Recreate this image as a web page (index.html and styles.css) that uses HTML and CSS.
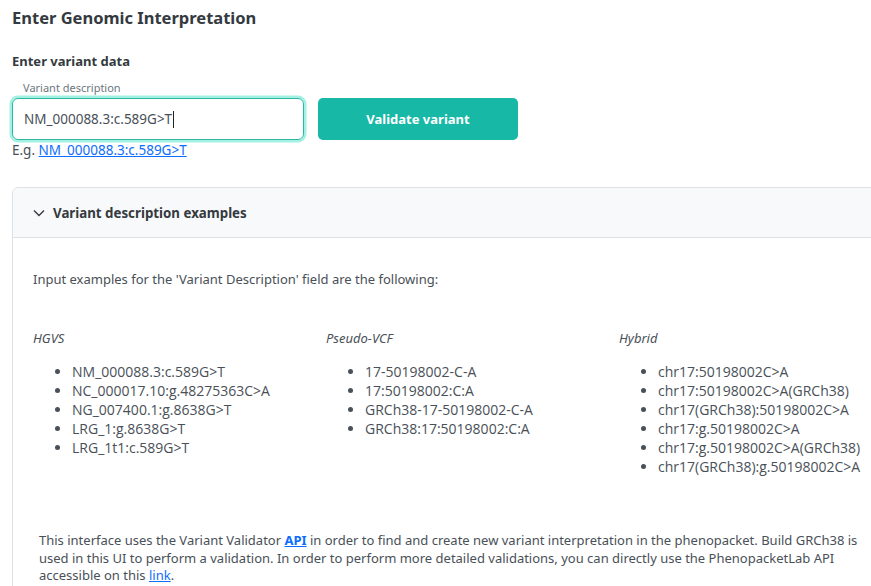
FILE: index.html
```html
<!DOCTYPE html>
<html>
<head>
<meta charset="utf-8">
<link rel="stylesheet" href="styles.css">
</head>
<body>
<div class="page">
  <h1 class="title">Enter Genomic Interpretation</h1>
  <h2 class="subtitle">Enter variant data</h2>
  <div class="form-row">
    <div class="field">
      <label class="label">Variant description</label>
      <div class="input">NM_000088.3:c.589G&gt;T<span class="caret"></span></div>
      <div class="hint">E.g. <a href="#">NM_000088.3:c.589G&gt;T</a></div>
    </div>
    <button class="btn">Validate variant</button>
  </div>

  <div class="card">
    <div class="card-header">
      <svg class="chev" width="12" height="8" viewBox="0 0 12 8"><path d="M1 1.5 L6 6.5 L11 1.5" fill="none" stroke="#343a40" stroke-width="1.4"/></svg>
      <span>Variant description examples</span>
    </div>
    <div class="card-body">
      <p class="intro">Input examples for the 'Variant Description' field are the following:</p>
      <div class="cols">
        <div class="col">
          <div class="col-title">HGVS</div>
          <ul>
            <li>NM_000088.3:c.589G&gt;T</li>
            <li>NC_000017.10:g.48275363C&gt;A</li>
            <li>NG_007400.1:g.8638G&gt;T</li>
            <li>LRG_1:g.8638G&gt;T</li>
            <li>LRG_1t1:c.589G&gt;T</li>
          </ul>
        </div>
        <div class="col">
          <div class="col-title">Pseudo-VCF</div>
          <ul>
            <li>17-50198002-C-A</li>
            <li>17:50198002:C:A</li>
            <li>GRCh38-17-50198002-C-A</li>
            <li>GRCh38:17:50198002:C:A</li>
          </ul>
        </div>
        <div class="col">
          <div class="col-title">Hybrid</div>
          <ul>
            <li>chr17:50198002C&gt;A</li>
            <li>chr17:50198002C&gt;A(GRCh38)</li>
            <li>chr17(GRCh38):50198002C&gt;A</li>
            <li>chr17:g.50198002C&gt;A</li>
            <li>chr17:g.50198002C&gt;A(GRCh38)</li>
            <li>chr17(GRCh38):g.50198002C&gt;A</li>
          </ul>
        </div>
      </div>
      <p class="note">This interface uses the Variant Validator <a href="#" class="strong">API</a> in order to find and create new variant interpretation in the phenopacket. Build GRCh38 is used in this UI to perform a validation. In order to perform more detailed validations, you can directly use the PhenopacketLab API accessible on this <a href="#">link</a>.</p>
    </div>
  </div>
</div>
</body>
</html>
```
FILE: styles.css
```css
html, body {
  margin: 0;
  padding: 0;
  overflow: hidden;
  background: #fff;
}
body {
  font-family: "Noto Sans", "Open Sans", sans-serif;
  color: #343a40;
}
.page {
  padding: 0 0 0 12px;
  width: 940px;
}
.title {
  margin: 0;
  padding-top: 6px;
  font-size: 16.5px;
  font-weight: 700;
  line-height: 24px;
  color: #343a40;
}
.subtitle {
  margin: 22px 0 0;
  font-size: 13px;
  font-weight: 700;
  line-height: 18px;
  color: #343a40;
}
.form-row {
  display: flex;
  align-items: flex-start;
  gap: 14px;
  margin-top: 11px;
}
.field {
  display: flex;
  flex-direction: column;
  width: 292px;
}
.label {
  font-size: 11px;
  line-height: 14px;
  color: #6c757d;
  padding-left: 11px;
  margin-bottom: 3px;
}
.input {
  box-sizing: border-box;
  height: 42px;
  border: 1.5px solid #2fb7a2;
  border-radius: 6px;
  box-shadow: 0 0 0 2.5px #a3f1e2;
  padding: 0 11px;
  font-size: 13.5px;
  line-height: 39px;
  color: #495057;
  display: flex;
  align-items: center;
}
.caret {
  display: inline-block;
  width: 1px;
  height: 17px;
  background: #222;
  margin-left: 1px;
}
.hint {
  font-size: 13.5px;
  line-height: 20px;
  margin-top: 0;
  color: #495057;
}
a {
  color: #0d6efd;
  text-decoration: underline;
}
.btn {
  margin-top: 17px;
  width: 200px;
  height: 42px;
  border: none;
  border-radius: 5px;
  background: #17b8a6;
  color: #fff;
  font-family: "Noto Sans", "Open Sans", sans-serif;
  font-weight: 700;
  font-size: 13px;
}
.card {
  margin-top: 27px;
  width: 921px;
  border: 1px solid #dee2e6;
  border-radius: 6px;
}
.card-header {
  height: 49px;
  background: #f8f9fa;
  border-bottom: 1px solid #dee2e6;
  border-radius: 6px 6px 0 0;
  display: flex;
  align-items: center;
  padding-left: 20px;
  gap: 8px;
  font-size: 13.3px;
  font-weight: 700;
  color: #343a40;
}
.card-body {
  padding: 20px 20px 30px;
}
.intro {
  margin: 12px 0 0;
  font-size: 13px;
  line-height: 18px;
  color: #495057;
}
.cols {
  display: grid;
  grid-template-columns: 293px 293px 293px;
  margin-top: 41px;
}
.col-title {
  font-style: italic;
  font-size: 13px;
  line-height: 18px;
  color: #495057;
}
ul {
  margin: 15px 0 0;
  padding-left: 39px;
  font-family: "Open Sans", sans-serif;
  font-size: 14px;
  line-height: 19px;
  color: #495057;
}
.note {
  margin: 56px 0 0;
  padding-left: 6px;
  width: 830px;
  font-size: 13px;
  line-height: 17.5px;
  color: #495057;
}
.note .strong {
  font-weight: 700;
}
```
